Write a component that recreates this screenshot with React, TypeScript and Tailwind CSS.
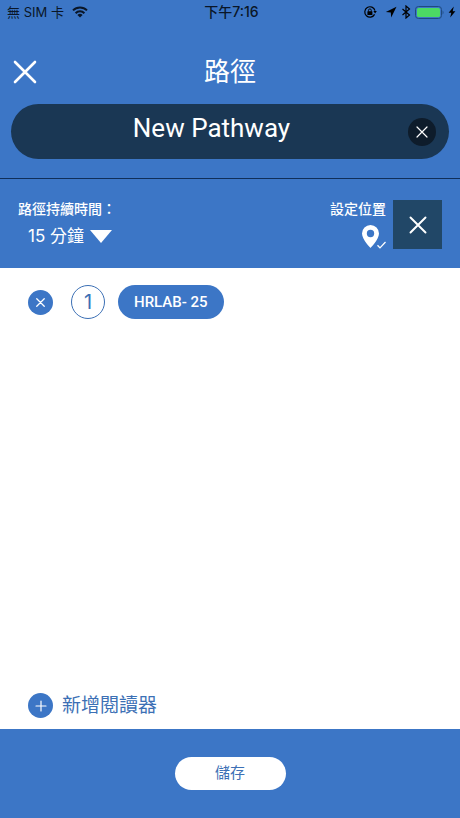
import { useState } from 'react'

const BLUE = 'bg-[#3c76c6]'

function Cross({ className, width = 2 }: { className: string; width?: number }) {
  return (
    <svg viewBox="0 0 24 24" className={className} fill="none" stroke="currentColor" strokeWidth={width} strokeLinecap="round" aria-hidden="true">
      <path d="M2 2 22 22M22 2 2 22" />
    </svg>
  )
}

function StatusBar() {
  return (
    <div className="grid h-6 grid-cols-3 items-center pr-1 pl-[7px] text-[13px] leading-4 text-[#0a1628]">
      <div className="flex items-center gap-2">
        <span>無 SIM 卡</span>
        <svg viewBox="0 0 16 12" className="h-3 w-4" fill="none" stroke="currentColor" strokeWidth="2" aria-hidden="true">
          <path d="M1 4.4a10 10 0 0 1 14 0" />
          <path d="M3.6 7.2a6.2 6.2 0 0 1 8.8 0" />
          <path d="M8 11.6 5.4 9a3.7 3.7 0 0 1 5.2 0Z" fill="currentColor" stroke="none" />
        </svg>
      </div>
      <span className="text-center text-sm leading-4 font-medium">下午7:16</span>
      <div className="flex items-center justify-end gap-1 text-black">
        <svg viewBox="0 0 14 14" className="mr-1 size-[14px]" fill="none" stroke="currentColor" aria-hidden="true">
          <path d="M11.6 9.4a5.2 5.2 0 1 1 .4-3.8" strokeWidth="1.2" />
          <path d="M10.4 6h3.4L12.1 8.6Z" fill="currentColor" stroke="none" />
          <rect x="4.4" y="6.3" width="5" height="3.6" rx=".5" fill="currentColor" stroke="none" />
          <path d="M5.5 6.6V5.3a1.4 1.4 0 0 1 2.8 0v1.3" strokeWidth=".9" />
        </svg>
        <svg viewBox="0 0 12 12" className="size-3" fill="currentColor" aria-hidden="true">
          <path d="M11.5.8.8 6l5 .4.4 5Z" />
        </svg>
        <svg viewBox="0 0 10 14" className="h-[14px] w-[10px]" fill="none" stroke="currentColor" strokeWidth="1.2" aria-hidden="true">
          <path d="m1.5 4 7 6L5 13V1l3.5 3-7 6" />
        </svg>
        <svg viewBox="0 0 29 13" className="h-[13px] w-[29px]" aria-hidden="true">
          <rect x=".5" y=".5" width="26" height="12" rx="3" fill="none" stroke="#1f4a80" />
          <rect x="2" y="2" width="23" height="9" rx="1.5" fill="#4cd964" />
          <path d="M27.6 4.5c1.2.6 1.2 3.4 0 4Z" fill="#1f4a80" />
        </svg>
        <svg viewBox="0 0 8 12" className="h-3 w-2" fill="currentColor" aria-hidden="true">
          <path d="M5.8.5.6 6.8h2.7L2.2 11.5 7.4 5.2H4.7Z" />
        </svg>
      </div>
    </div>
  )
}

export default function App() {
  const [name, setName] = useState('New Pathway')
  const [duration, setDuration] = useState('15')

  return (
    <div className="flex min-h-screen flex-col bg-white font-['Inter','Noto_Sans_CJK_TC',sans-serif]">
      <header className={`${BLUE} border-b border-[#102f59] pb-[19px]`}>
        <StatusBar />
        <div className="grid grid-cols-3 items-center px-[13px] pt-[26px] pb-[10px]">
          <button type="button" aria-label="關閉" className="justify-self-start text-white">
            <Cross className="size-6" width={2.6} />
          </button>
          <h1 className="py-1 text-center text-[26px] leading-9 text-white">路徑</h1>
        </div>
        <div className="mx-[11px] flex h-[55px] items-center rounded-full bg-[#1a3754] pr-[13px] pl-1">
          <input
            aria-label="路徑名稱"
            value={name}
            onChange={(e) => setName(e.target.value)}
            className="h-10 min-w-0 flex-1 bg-transparent pb-2 text-center font-['Roboto',sans-serif] text-[26px] leading-8 text-white outline-none"
          />
          <button
            type="button"
            aria-label="清除"
            onClick={() => setName('')}
            className="flex size-7 items-center justify-center rounded-full bg-[#0e1c2b] text-white"
          >
            <Cross className="size-3" width={2.4} />
          </button>
        </div>
      </header>

      <section className={`${BLUE} flex items-start justify-between px-[18px] pt-[21px] pb-[19px] text-white`}>
        <div>
          <label htmlFor="duration" className="block text-sm leading-[18px] font-medium">
            路徑持續時間：
          </label>
          <div className="mt-[6px] flex items-center gap-px pl-[10px]">
            <select
              id="duration"
              value={duration}
              onChange={(e) => setDuration(e.target.value)}
              className="appearance-none bg-transparent text-[17px] leading-6 outline-none"
            >
              <option value="15">15 分鐘</option>
              <option value="30">30 分鐘</option>
              <option value="45">45 分鐘</option>
            </select>
            <svg viewBox="0 0 22 13" className="pointer-events-none h-[13px] w-[22px]" fill="currentColor" aria-hidden="true">
              <path d="M0 0h22L11 13Z" />
            </svg>
          </div>
        </div>
        <div className="flex gap-[7px]">
          <button type="button" className="flex flex-col items-end gap-[6px]">
            <span className="text-sm leading-[18px] font-medium">設定位置</span>
            <svg viewBox="0 0 26 25" className="h-[25px] w-[26px]" aria-hidden="true">
              <path d="M10.5 1A8.6 8.6 0 0 0 2 9.6C2 15.6 10.5 24 10.5 24S19 15.6 19 9.6A8.6 8.6 0 0 0 10.5 1Zm0 4.8a3.7 3.7 0 1 1 0 7.4 3.7 3.7 0 0 1 0-7.4Z" fill="currentColor" />
              <path d="m17.5 21.2 2.5 2.7 5.5-5.9" fill="none" stroke="currentColor" strokeWidth="1.3" />
            </svg>
          </button>
          <button type="button" aria-label="取消位置" className="flex size-[49px] items-center justify-center bg-[#214767]">
            <Cross className="size-[18px]" width={2.6} />
          </button>
        </div>
      </section>

      <main className="flex flex-1 flex-col justify-between px-7 pt-[17px] pb-[11px] text-[#3c70b5]">
        <ol>
          <li className="flex items-center">
            <button type="button" aria-label="移除" className={`${BLUE} flex size-[25px] items-center justify-center rounded-full text-white`}>
              <Cross className="size-[9px]" width={3.4} />
            </button>
            <span className="ml-[18px] flex size-[34px] items-center justify-center rounded-full border border-[#3c70b5] text-xl leading-6">
              1
            </span>
            <button
              type="button"
              className={`${BLUE} ml-[13px] h-[34px] rounded-full px-4 font-['Roboto',sans-serif] text-[15px] font-medium text-white`}
            >
              HRLAB- 25
            </button>
          </li>
        </ol>
        <button type="button" className="flex items-center gap-[9px] self-start text-[19px] leading-6">
          <span className={`${BLUE} flex size-[25px] items-center justify-center rounded-full text-white`}>
            <svg viewBox="0 0 12 12" className="size-3" stroke="currentColor" strokeWidth="1.2" strokeLinecap="round" aria-hidden="true">
              <path d="M6 1v10M1 6h10" />
            </svg>
          </span>
          新增閱讀器
        </button>
      </main>

      <footer className={`${BLUE} flex justify-center py-7`}>
        <button type="button" className="h-[33px] w-[111px] rounded-full bg-white text-[15px] text-[#3c70b5]">
          儲存
        </button>
      </footer>
    </div>
  )
}
